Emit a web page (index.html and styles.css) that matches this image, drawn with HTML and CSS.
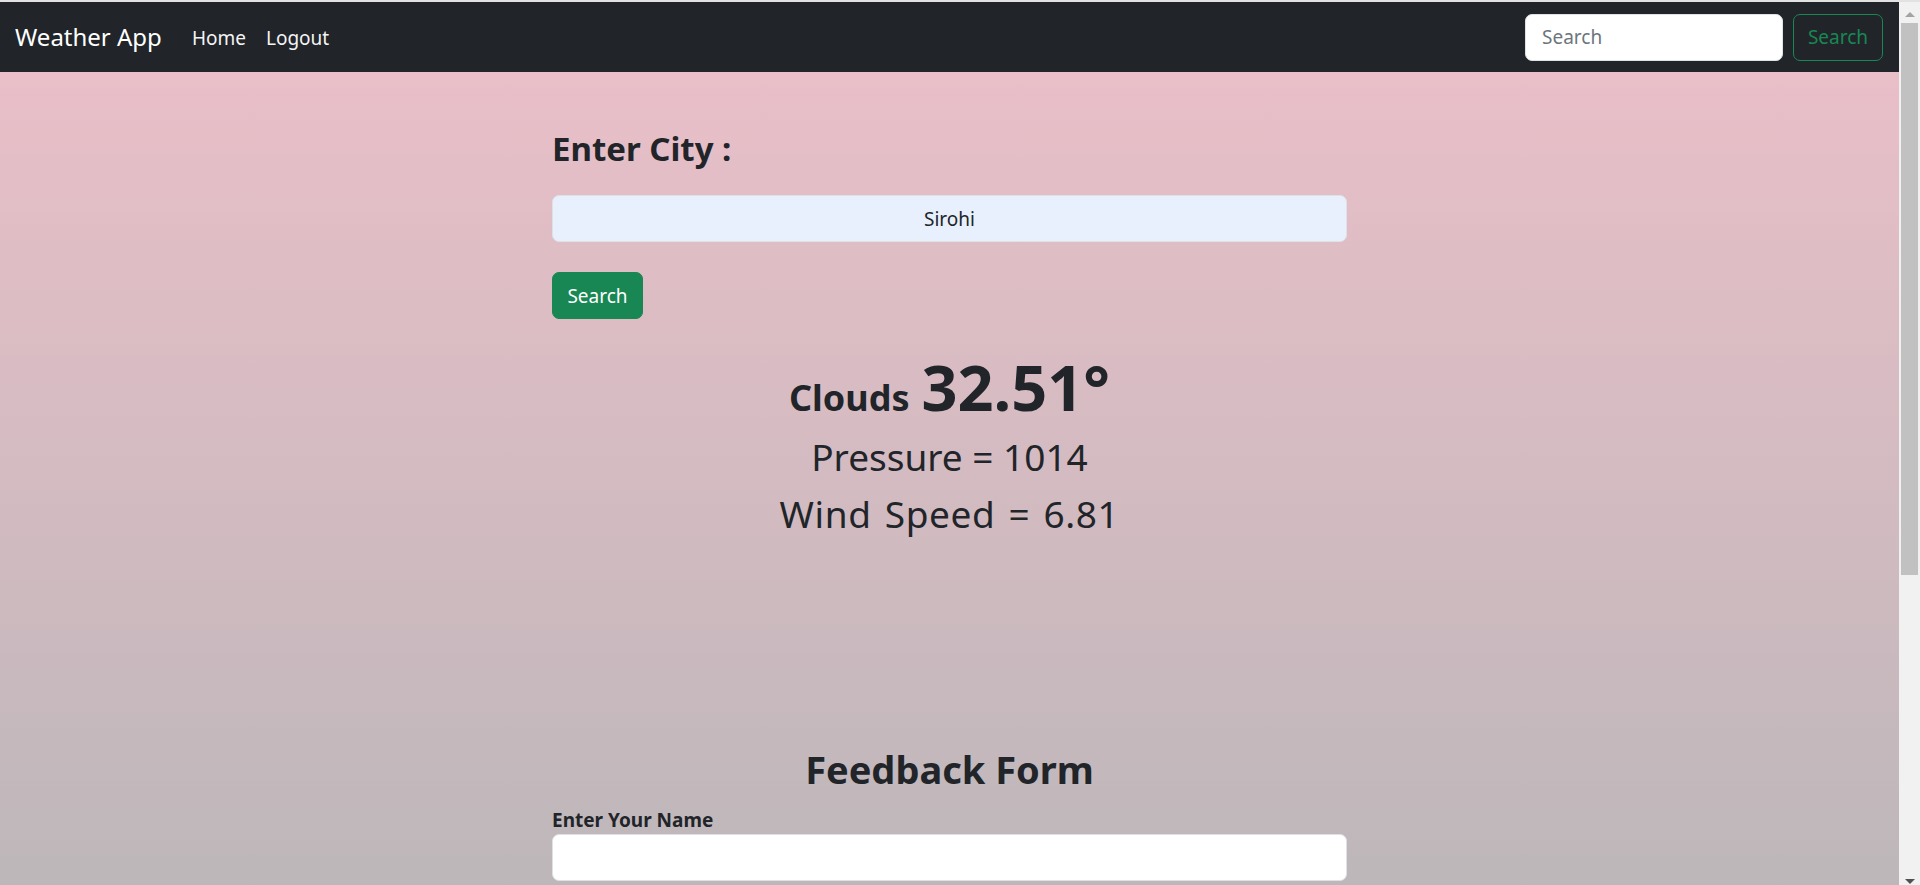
FILE: index.html
```html
<!DOCTYPE html>
<html lang="en">
<head>
<meta charset="utf-8">
<title>Weather App</title>
<link rel="stylesheet" href="styles.css">
</head>
<body>
<div class="topline"></div>
<div class="window">
  <div class="page">
    <nav class="navbar">
      <a class="brand" href="#">Weather App</a>
      <ul class="nav-links">
        <li><a class="nav-link" href="#">Home</a></li>
        <li><a class="nav-link" href="#">Logout</a></li>
      </ul>
      <form class="search-form">
        <input class="search-input" type="search" placeholder="Search">
        <button class="btn-outline" type="button">Search</button>
      </form>
    </nav>
    <main class="container">
      <h3 class="city-title">Enter City :</h3>
      <input class="city-input" type="text" value="Sirohi">
      <button class="btn-success" type="button">Search</button>
      <div class="temp"><span class="cond">Clouds</span><span class="deg">32.51°</span></div>
      <h2 class="stat">Pressure = 1014</h2>
      <h2 class="stat wide">Wind Speed = 6.81</h2>
      <h2 class="feedback-title">Feedback Form</h2>
      <label class="field-label">Enter Your Name</label>
      <input class="field-input" type="text">
    </main>
  </div>
  <div class="scrollbar">
    <div class="arrow-up"></div>
    <div class="thumb"></div>
    <div class="track"></div>
    <div class="arrow-down"></div>
  </div>
</div>
</body>
</html>
```

FILE: styles.css
```css
* { box-sizing: border-box; }
html, body { margin: 0; padding: 0; height: 885px; overflow: hidden; }
body {
  font-family: "Noto Sans", "Open Sans", sans-serif;
  color: #212529;
  background: #f0f0f0;
}
.topline { height: 2px; background: #e2e2e2; }
.window { display: flex; height: 883px; }
.page {
  flex: 1;
  overflow: hidden;
  background: linear-gradient(to bottom, #e9bfc8 70px, #bdb7ba 883px);
}
.navbar {
  height: 70px;
  display: flex;
  align-items: center;
  padding: 0 16px 0 15px;
  background: #212529;
}
.brand {
  font-size: 24px;
  color: #fff;
  text-decoration: none;
  margin-right: 20px;
  line-height: 1;
}
.nav-links { display: flex; list-style: none; margin: 0; padding: 2px 0 0; }
.nav-link {
  display: block;
  padding: 0 10px;
  font-size: 19px;
  color: #f4f4f5;
  text-decoration: none;
}
.search-form { margin-left: auto; display: flex; gap: 10px; }
.search-input {
  width: 258px;
  height: 47px;
  border: 1px solid #dee2e6;
  border-radius: 7px;
  padding: 0 16px;
  font: inherit;
  font-size: 19px;
  background: #fff;
  color: #212529;
}
.search-input::placeholder { color: #6c757d; }
.btn-outline {
  width: 90px;
  height: 47px;
  border: 1px solid #198754;
  border-radius: 7px;
  background: transparent;
  color: #198754;
  font: inherit;
  font-size: 19px;
  padding: 0;
}
.container {
  width: 795px;
  margin: 0 auto;
  display: flex;
  flex-direction: column;
}
.city-title {
  margin: 56px 0 0;
  font-size: 33px;
  line-height: 42px;
  font-weight: 700;
}
.city-input {
  margin-top: 25px;
  height: 47px;
  width: 100%;
  border: 1px solid #dee2e6;
  border-radius: 7px;
  background: #e8f0fe;
  text-align: center;
  font: inherit;
  font-size: 19px;
  color: #212529;
}
.btn-success {
  margin-top: 30px;
  align-self: flex-start;
  width: 91px;
  height: 47px;
  border: 1px solid #198754;
  border-radius: 7px;
  background: #198754;
  color: #fff;
  font: inherit;
  font-size: 19px;
  padding: 0;
}
.temp {
  margin-top: 31px;
  text-align: center;
  font-size: 63px;
  line-height: 74px;
  font-weight: 700;
}
.cond { font-size: 36px; line-height: 1; margin-right: 12px; }
.stat {
  margin: 9px 0 0;
  text-align: center;
  font-size: 37px;
  line-height: 47px;
  font-weight: 400;
}
.stat + .stat { margin-top: 10px; }
.wide { word-spacing: 3px; letter-spacing: 0.6px; }
.feedback-title {
  margin: 208px 0 0;
  text-align: center;
  font-size: 38px;
  line-height: 48px;
  font-weight: 700;
}
.field-label {
  margin-top: 15px;
  font-size: 19px;
  line-height: 24px;
  font-weight: 700;
}
.field-input {
  margin-top: 2px;
  height: 47px;
  width: 100%;
  border: 1px solid #dee2e6;
  border-radius: 7px;
  background: #fff;
  font: inherit;
}
.scrollbar {
  width: 21px;
  background: #f1f1f1;
  display: flex;
  flex-direction: column;
  align-items: center;
}
.arrow-up {
  height: 21px;
  width: 100%;
  display: flex;
  align-items: center;
  justify-content: center;
}
.arrow-up::before {
  content: "";
  border-left: 5px solid transparent;
  border-right: 5px solid transparent;
  border-bottom: 5px solid #a3a3a3;
  margin-top: 4px;
}
.thumb { width: 17px; height: 552px; background: #c1c1c1; }
.track { flex: 1; }
.arrow-down {
  height: 21px;
  width: 100%;
  display: flex;
  align-items: flex-end;
  justify-content: center;
  padding-bottom: 1px;
}
.arrow-down::before {
  content: "";
  border-left: 5px solid transparent;
  border-right: 5px solid transparent;
  border-top: 5px solid #505050;
}
```
